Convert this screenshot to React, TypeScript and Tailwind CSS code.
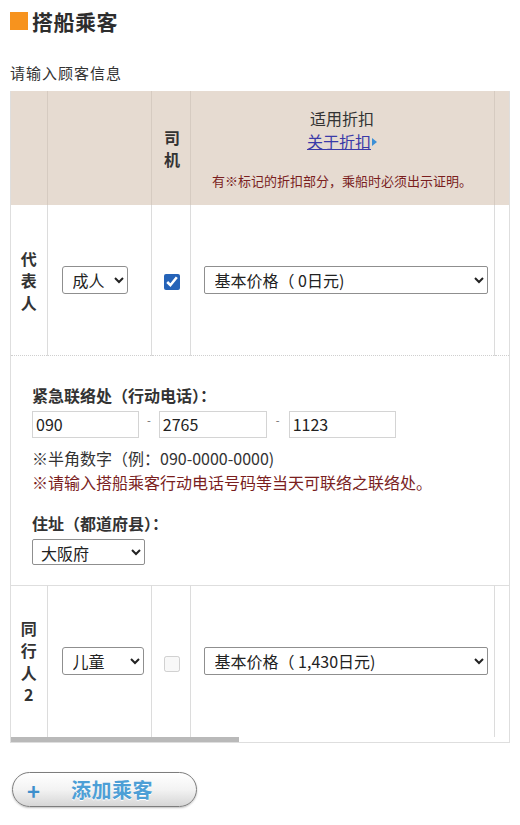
import React from 'react';

const font = { fontFamily: '"Noto Sans CJK SC", "Noto Sans", sans-serif' };

const StackLabel: React.FC<{ chars: string[] }> = ({ chars }) => (
  <div className="flex flex-col items-center text-[16px] leading-[22px] font-bold text-[#333]">
    {chars.map((c, i) => (
      <span key={i}>{c}</span>
    ))}
  </div>
);

const PassengerRow: React.FC<{
  label: string[];
  type: string;
  typeWidth: string;
  driver: boolean;
  price: string;
  height: string;
  bottom: string;
}> = ({ label, type, typeWidth, driver, price, height, bottom }) => (
  <tr className={`${height} ${bottom}`}>
    <td className="border-r border-[#dcdcdc] align-middle">
      <StackLabel chars={label} />
    </td>
    <td className="border-r border-[#dcdcdc] align-middle pl-[14px]">
      <select
        defaultValue={type}
        className={`${typeWidth} h-[28px] border border-[#8f8f8f] rounded-[3px] bg-white text-[16px] text-[#222] pl-[6px]`}
      >
        <option>{type}</option>
      </select>
    </td>
    <td className="border-r border-[#dcdcdc] align-middle text-center">
      {driver ? (
        <input type="checkbox" defaultChecked className="ml-[3px] w-[16px] h-[16px] accent-[#2563b8] align-middle" />
      ) : (
        <input type="checkbox" disabled className="ml-[3px] w-[16px] h-[16px] align-middle" />
      )}
    </td>
    <td className="border-r border-[#dcdcdc] align-middle pl-[13px]">
      <select
        defaultValue={price}
        className="w-[284px] h-[28px] border border-[#8f8f8f] rounded-[2px] bg-white text-[16px] text-[#222] pl-[6px]"
      >
        <option>{price}</option>
      </select>
    </td>
    <td className="align-middle"></td>
  </tr>
);

export default function App() {
  return (
    <div className="min-h-[825px] bg-white px-[10px] pt-[8px] text-[#333]" style={font}>
      <h2 className="flex items-center h-[26px] gap-[4px]">
        <span className="w-[18px] h-[18px] bg-[#f7931e]"></span>
        <span className="text-[21px] font-bold text-[#2d2d2d] leading-[26px] tracking-[0.5px]">搭船乘客</span>
      </h2>

      <p className="mt-[29px] text-[15px] leading-[20px] text-[#333] tracking-[1px]">请输入顾客信息</p>

      <div className="mt-[8px] w-[500px] border-l border-r border-b border-[#dedede]">
        <div className="overflow-hidden">
          <table className="table-fixed border-collapse w-[1086px]">
            <colgroup>
              <col className="w-[36px]" />
              <col className="w-[104px]" />
              <col className="w-[39px]" />
              <col className="w-[304px]" />
              <col className="w-[603px]" />
            </colgroup>
            <thead>
              <tr className="h-[114px] bg-[#e6dbd1]">
                <th className="border-r border-[#d6cbc1]"></th>
                <th className="border-r border-[#d6cbc1]"></th>
                <th className="border-r border-[#d6cbc1] align-middle">
                  <div className="ml-[3px]">
                    <StackLabel chars={['司', '机']} />
                  </div>
                </th>
                <th className="border-r border-[#d6cbc1] align-middle font-normal">
                  <div className="flex flex-col items-center">
                    <span className="text-[16px] leading-[23px] text-[#333]">适用折扣</span>
                    <a
                      href="#"
                      className="flex items-center text-[16px] leading-[23px] text-[#3a3aa8] underline"
                    >
                      关于折扣
                      <svg width="5" height="8" viewBox="0 0 5 8" className="ml-[1px]">
                        <path d="M0 0 L5 4 L0 8 Z" fill="#3c8fd6" />
                      </svg>
                    </a>
                    <span className="mt-[20px] text-[13px] leading-[16px] text-[#7a1e1e]">
                      有※标记的折扣部分，乘船时必须出示证明。
                    </span>
                  </div>
                </th>
                <th></th>
              </tr>
            </thead>
            <tbody>
              <PassengerRow
                label={['代', '表', '人']}
                type="成人"
                typeWidth="w-[66px]"
                driver
                price="基本价格（ 0日元)"
                height="h-[150px]"
                bottom="border-b border-dotted border-[#cfcfcf]"
              />
              <tr className="h-[230px] border-b border-[#dedede]">
                <td colSpan={5} className="align-top pl-[21px] pt-[29px]">
                  <div className="text-[16px] leading-[20px] font-bold text-[#333]">紧急联络处（行动电话）：</div>
                  <div className="mt-[6px] flex items-center">
                    <input
                      defaultValue="090"
                      className="w-[107px] h-[27px] border border-[#d4d4d4] px-[3px] text-[16px] text-[#222]"
                    />
                    <span className="mx-[8px] text-[11px] text-[#666] -mt-[8px]">-</span>
                    <input
                      defaultValue="2765"
                      className="w-[108px] h-[27px] border border-[#d4d4d4] px-[3px] text-[16px] text-[#222]"
                    />
                    <span className="mx-[9px] text-[11px] text-[#666] -mt-[8px]">-</span>
                    <input
                      defaultValue="1123"
                      className="w-[107px] h-[27px] border border-[#d4d4d4] px-[3px] text-[16px] text-[#222]"
                    />
                  </div>
                  <div className="mt-[8px] text-[16px] leading-[24px] text-[#333]">※半角数字（例：090-0000-0000)</div>
                  <div className="text-[16px] leading-[24px] text-[#7a1e1e]">
                    ※请输入搭船乘客行动电话号码等当天可联络之联络处。
                  </div>
                  <div className="mt-[19px] text-[16px] leading-[20px] font-bold text-[#333]">住址（都道府县）：</div>
                  <select
                    defaultValue="大阪府"
                    className="mt-[6px] w-[113px] h-[26px] border border-[#8f8f8f] rounded-[2px] bg-white text-[16px] text-[#222] pl-[4px]"
                  >
                    <option>大阪府</option>
                  </select>
                </td>
              </tr>
              <PassengerRow
                label={['同', '行', '人', '2']}
                type="儿童"
                typeWidth="w-[82px]"
                driver={false}
                price="基本价格（ 1,430日元)"
                height="h-[152px]"
                bottom=""
              />
            </tbody>
          </table>
        </div>
        {/* horizontal scroll bar */}
        <div className="h-[5px] bg-white">
          <div className="h-full w-[228px] bg-[#b9b9b9]"></div>
        </div>
      </div>

      <button className="mt-[29px] ml-[2px] w-[185px] h-[35px] rounded-full border-[1.5px] border-[#7d7d7d] bg-linear-to-b from-white via-[#f3f3f3] to-[#d6d6d6] shadow-[0_1px_2px_rgba(0,0,0,0.25)] flex items-center pl-[14px]">
        <span className="text-[22px] font-bold leading-none text-[#3d8fcc]">+</span>
        <span className="ml-[31px] text-[20px] font-bold text-[#4d9fd6] tracking-[0.5px] [text-shadow:0_1px_0_#fff]">
          添加乘客
        </span>
      </button>
    </div>
  );
}
